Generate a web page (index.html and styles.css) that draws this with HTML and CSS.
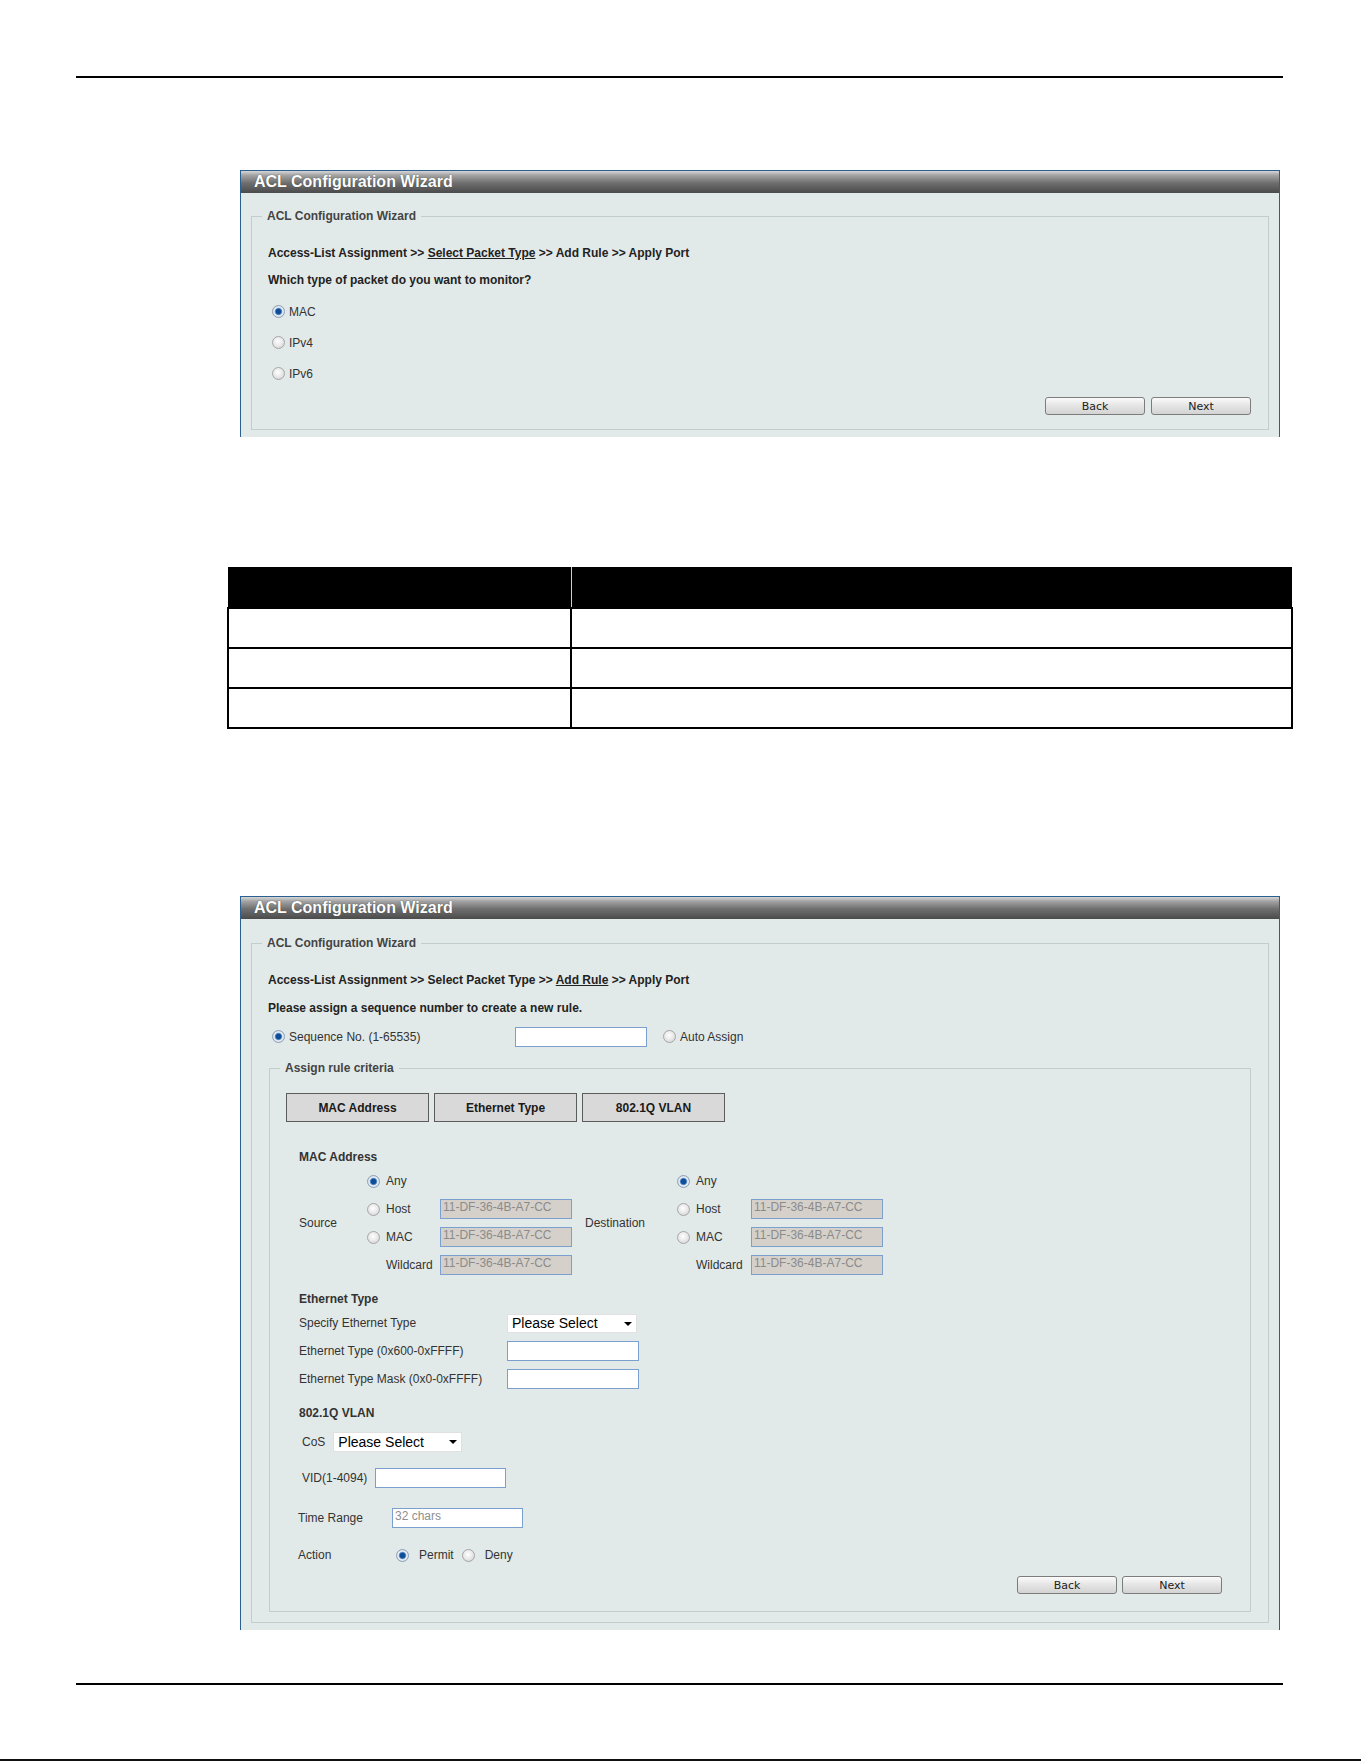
FILE: index.html
```html
<!DOCTYPE html>
<html lang="en">
<head>
  <meta charset="UTF-8">
  <meta name="viewport" content="width=device-width, initial-scale=1.0">
  <title>ACL Configuration Wizard</title>
  <link rel="stylesheet" href="styles.css">
</head>
<body>
  <div class="page">
    <div class="rule"></div>

    <!-- Paso 2: tipo de paquete -->
    <div class="panel panel-first">
      <div class="panel-title">ACL Configuration Wizard</div>
      <div class="panel-body">
        <fieldset class="box box-type">
          <legend>ACL Configuration Wizard</legend>
          <div class="steps">Access-List Assignment &gt;&gt; <u>Select Packet Type</u> &gt;&gt; Add Rule &gt;&gt; Apply Port</div>
          <div class="question">Which type of packet do you want to monitor?</div>
          <div class="choices">
            <label class="opt-row"><input type="radio" name="ptype" checked>MAC</label>
            <label class="opt-row"><input type="radio" name="ptype">IPv4</label>
            <label class="opt-row"><input type="radio" name="ptype">IPv6</label>
          </div>
          <div class="actions">
            <button class="btn">Back</button>
            <button class="btn">Next</button>
          </div>
        </fieldset>
      </div>
    </div>

    <table class="params">
      <tr><th></th><th></th></tr>
      <tr><td></td><td></td></tr>
      <tr><td></td><td></td></tr>
      <tr><td></td><td></td></tr>
    </table>

    <!-- Paso 3: reglas MAC -->
    <div class="panel panel-second">
      <div class="panel-title">ACL Configuration Wizard</div>
      <div class="panel-body">
        <fieldset class="box box-rule">
          <legend>ACL Configuration Wizard</legend>
          <div class="steps">Access-List Assignment &gt;&gt; Select Packet Type &gt;&gt; <u>Add Rule</u> &gt;&gt; Apply Port</div>
          <div class="question question-rule">Please assign a sequence number to create a new rule.</div>

          <div class="seq">
            <label class="seq-label"><input type="radio" name="seq" checked>Sequence No. (1-65535)</label>
            <input class="field" type="text">
            <label class="auto"><input type="radio" name="seq">Auto Assign</label>
          </div>

          <fieldset class="criteria">
            <legend>Assign rule criteria</legend>
            <div class="tabs">
              <button class="tab">MAC Address</button>
              <button class="tab">Ethernet Type</button>
              <button class="tab">802.1Q VLAN</button>
            </div>

            <div class="section">
              <div class="section-title mac-title">MAC Address</div>
              <div class="mac-grid">
                <span class="side src-side">Source</span>
                <span class="side dst-side">Destination</span>

                <span></span>
                <label class="opt"><input type="radio" name="src" checked>Any</label>
                <span></span>
                <span></span>
                <label class="opt"><input type="radio" name="dst" checked>Any</label>
                <span></span>

                <label class="opt"><input type="radio" name="src">Host</label>
                <input class="field mac" type="text" value="11-DF-36-4B-A7-CC" disabled>
                <label class="opt"><input type="radio" name="dst">Host</label>
                <input class="field mac" type="text" value="11-DF-36-4B-A7-CC" disabled>

                <label class="opt"><input type="radio" name="src">MAC</label>
                <input class="field mac" type="text" value="11-DF-36-4B-A7-CC" disabled>
                <label class="opt"><input type="radio" name="dst">MAC</label>
                <input class="field mac" type="text" value="11-DF-36-4B-A7-CC" disabled>

                <span></span>
                <span class="wildcard">Wildcard</span>
                <input class="field mac" type="text" value="11-DF-36-4B-A7-CC" disabled>
                <span></span>
                <span class="wildcard">Wildcard</span>
                <input class="field mac" type="text" value="11-DF-36-4B-A7-CC" disabled>
              </div>

              <div class="section-title eth-title">Ethernet Type</div>
              <div class="eth-grid">
                <span>Specify Ethernet Type</span>
                <span class="select"><select><option>Please Select</option></select></span>
                <span>Ethernet Type (0x600-0xFFFF)</span>
                <input class="field" type="text">
                <span>Ethernet Type Mask (0x0-0xFFFF)</span>
                <input class="field" type="text">
              </div>

              <div class="section-title vlan-title">802.1Q VLAN</div>
              <div class="inline-row cos-row">
                <span>CoS</span>
                <span class="select select-cos"><select><option>Please Select</option></select></span>
              </div>
              <div class="inline-row vid-row">
                <span>VID(1-4094)</span>
                <input class="field field-vid" type="text">
              </div>

              <div class="pair-row time-row">
                <span>Time Range</span>
                <input class="field field-time" type="text" placeholder="32 chars">
              </div>
              <div class="pair-row action-row">
                <span>Action</span>
                <label class="action"><input type="radio" name="act" checked>Permit</label>
                <label class="action action-deny"><input type="radio" name="act">Deny</label>
              </div>
            </div>

            <div class="actions actions-rule">
              <button class="btn">Back</button>
              <button class="btn">Next</button>
            </div>
          </fieldset>
        </fieldset>
      </div>
    </div>

    <div class="rule rule-bottom"></div>
  </div>
  <div class="edge"></div>
</body>
</html>
```

FILE: styles.css
```css
body {
  margin: 0;
  background: #fff;
  font-family: "Liberation Sans", Arial, sans-serif;
  font-size: 12px;
  color: #333;
}

.page {
  width: 1207px;
  margin-left: 76px;
  padding-top: 76px;
}

.rule {
  height: 2px;
  background: #000;
}

.rule-bottom {
  margin-top: 53px;
}

.edge {
  height: 2px;
  margin-top: 74px;
  background: #111;
}

/* Paneles del asistente */
.panel {
  width: 1040px;
  margin-left: 164px;
  box-sizing: border-box;
  border: 1px solid #2a5f91;
  border-bottom: none;
  background: #e2eae9;
}

.panel-first {
  margin-top: 92px;
}

.panel-second {
  margin-top: 167px;
}

.panel-title {
  height: 22px;
  padding-left: 13px;
  line-height: 22px;
  font-size: 16px;
  font-weight: bold;
  color: #fff;
  text-shadow: 0 0 1px #333;
  background: linear-gradient(#d6d6d6, #a2a2a2 20%, #6e6e6e 55%, #4b4b4b);
}

.panel-body {
  padding: 16px 10px 7px 10px;
}

.panel-second .panel-body {
  padding-top: 17px;
}

fieldset {
  min-width: 0;
  margin: 0;
  border: 1px solid #c2cdcd;
}

legend {
  margin-left: -6px;
  padding: 0 5px;
  line-height: 14px;
  font-weight: bold;
  color: #444;
}

.box {
  padding: 22px 17px 14px 16px;
}

.box-rule {
  padding-bottom: 10px;
}

.steps,
.question {
  line-height: 16px;
  font-weight: bold;
  color: #222;
}

.question {
  margin-top: 11px;
}

.question-rule {
  margin-top: 12px;
}

/* Botones de radio */
input[type="radio"] {
  appearance: none;
  flex: none;
  width: 13px;
  height: 13px;
  margin: 0 4px;
  box-sizing: border-box;
  border: 1px solid #a6a6a6;
  border-radius: 50%;
  background: radial-gradient(circle at 45% 40%, #fff, #e6e6e6 55%, #c9c9c9);
}

input[type="radio"]:checked {
  border-color: #8aa0b8;
  background: radial-gradient(circle, #0e4d98 0 2.4px, #5a8bc6 3.2px, #e9eef4 4.2px, #cdd5de 6.5px);
}

.choices {
  margin-top: 8px;
}

.opt-row {
  display: flex;
  align-items: center;
  height: 31px;
}

.actions {
  display: flex;
  justify-content: flex-end;
  gap: 6px;
  margin-top: 8px;
}

.actions-rule {
  gap: 5px;
  margin-top: 7px;
  margin-right: 12px;
}

.btn {
  width: 100px;
  height: 18px;
  padding: 0;
  border: 1px solid #7c7c7c;
  border-radius: 3px;
  background: linear-gradient(#fbfbfb, #e6e6e6 45%, #d3d3d3);
  font: 11px "DejaVu Sans", sans-serif;
  color: #222;
}

/* Campos de texto */
.field {
  width: 132px;
  height: 20px;
  box-sizing: border-box;
  margin: 0;
  padding: 0 2px;
  border: 1px solid #7ba0cf;
  background: #fff;
  font: 12px "Liberation Sans", Arial, sans-serif;
  color: #333;
}

.field.mac {
  padding-bottom: 4px;
  background: #d5d1ca;
  color: #8b8b8b;
}

.field::placeholder {
  color: #8f8f8f;
}

.seq {
  display: flex;
  align-items: center;
  height: 21px;
  margin-top: 10px;
}

.seq-label {
  display: flex;
  align-items: center;
  width: 247px;
}

.auto {
  display: flex;
  align-items: center;
  margin-left: 16px;
}

.auto input[type="radio"] {
  margin: 0 4px 0 0;
}

/* Criterios de la regla */
.criteria {
  margin: 14px 0 0 1px;
  padding: 18px 16px 17px 16px;
}

.tabs {
  display: flex;
  gap: 5px;
}

.tab {
  width: 143px;
  height: 29px;
  padding: 0;
  border: 1px solid #5c5c5c;
  background: #d9d9d9;
  font: bold 12px "Liberation Sans", Arial, sans-serif;
  color: #1a1a1a;
}

.section {
  padding-left: 13px;
}

.section-title {
  line-height: 16px;
  font-weight: bold;
  color: #333;
}

.mac-title {
  margin-top: 27px;
}

.eth-title,
.vlan-title {
  margin-top: 12px;
}

.mac-grid {
  display: grid;
  grid-template-columns: 68px 73px 132px 105px 74px 132px;
  grid-auto-rows: 28px;
  align-items: center;
  margin-top: 2px;
}

.side {
  grid-row: 2 / span 2;
}

.src-side {
  grid-column: 1;
}

.dst-side {
  grid-column: 4;
  padding-left: 13px;
}

.opt {
  display: flex;
  align-items: center;
}

.opt input[type="radio"] {
  margin: 0 6px 0 0;
}

.wildcard {
  padding-left: 19px;
}

.eth-grid {
  display: grid;
  grid-template-columns: 208px 132px;
  grid-auto-rows: 28px;
  align-items: center;
  margin-top: 2px;
}

.select {
  position: relative;
  display: inline-block;
  width: 130px;
  height: 19px;
}

.select select {
  appearance: none;
  width: 100%;
  height: 100%;
  margin: 0;
  padding: 0 0 0 4px;
  border: 1px solid #e0e0e0;
  border-radius: 0;
  background: #fff;
  font: 14px "Liberation Sans", Arial, sans-serif;
  color: #000;
}

/* Flecha del desplegable */
.select::after {
  content: "";
  position: absolute;
  top: 8px;
  right: 5px;
  border-left: 4px solid transparent;
  border-right: 4px solid transparent;
  border-top: 4px solid #000;
  pointer-events: none;
}

.select-cos {
  width: 129px;
  height: 20px;
  margin-left: 8px;
}

.inline-row {
  display: flex;
  align-items: center;
  height: 28px;
  padding-left: 3px;
}

.cos-row {
  margin-top: 7px;
}

.vid-row {
  margin-top: 8px;
}

.field-vid {
  width: 131px;
  margin-left: 8px;
}

.pair-row {
  display: flex;
  align-items: center;
  height: 28px;
  margin-left: -1px;
}

.pair-row > span {
  width: 94px;
}

.time-row {
  margin-top: 12px;
}

.field-time {
  width: 131px;
  padding-bottom: 4px;
}

.action-row {
  margin-top: 9px;
}

.action {
  display: flex;
  align-items: center;
}

.action input[type="radio"] {
  margin: 0 10px 0 4px;
}

.action-deny input[type="radio"] {
  margin-left: 8px;
}

/* Tabla de parámetros */
.params {
  width: 1066px;
  margin: 130px 0 0 151px;
  border-collapse: collapse;
}

.params th {
  height: 40px;
  padding: 0;
  background: #000;
}

.params th + th {
  border-left: 1px solid #cfcfcf;
}

.params td {
  height: 38px;
  padding: 0;
  border: 2px solid #000;
}

.params th:first-child,
.params td:first-child {
  width: 341px;
}

.params td + td {
  border-left-width: 1px;
}
```
